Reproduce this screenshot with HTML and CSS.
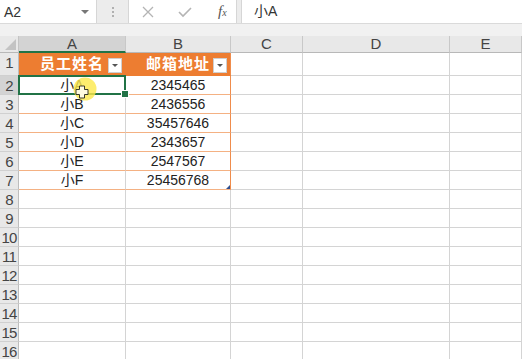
FILE: index.html
```html
<!DOCTYPE html>
<html lang="zh-CN">
<head>
    <meta charset="UTF-8">
    <title>员工表</title>
    <link rel="stylesheet" href="styles.css">
</head>
<body>
    <div class="app">
        <!-- formula bar -->
        <div class="formula-bar">
            <div class="name-box">
                <span>A2</span>
                <span class="caret"></span>
            </div>
            <div class="grip">
                <i></i><i></i><i></i>
            </div>
            <div class="fx-buttons">
                <svg class="icon" width="12" height="12" viewBox="0 0 12 12"><path d="M1 1 L11 11 M11 1 L1 11" stroke="#b4b4b4" stroke-width="1.3" fill="none"/></svg>
                <svg class="icon" width="14" height="12" viewBox="0 0 14 12"><path d="M1 6 L5 10 L13 2" stroke="#b4b4b4" stroke-width="1.6" fill="none"/></svg>
                <span class="fx">f<sub>x</sub></span>
            </div>
            <div class="formula-input">小A</div>
        </div>

        <div class="gap"></div>

        <!-- sheet -->
        <div class="sheet">
            <div class="corner"></div>
            <div class="col-head selected">A</div>
            <div class="col-head">B</div>
            <div class="col-head">C</div>
            <div class="col-head">D</div>
            <div class="col-head">E</div>

            <div class="row-head">1</div>
            <div class="cell th">员工姓名<span class="filter"></span></div>
            <div class="cell th last">邮箱地址<span class="filter"></span></div>
            <div class="cell"></div>
            <div class="cell"></div>
            <div class="cell"></div>

            <div class="row-head selected">2</div>
            <div class="cell td active">小A</div>
            <div class="cell td last">2345465</div>
            <div class="cell"></div>
            <div class="cell"></div>
            <div class="cell"></div>

            <div class="row-head">3</div>
            <div class="cell td">小B</div>
            <div class="cell td last">2436556</div>
            <div class="cell"></div>
            <div class="cell"></div>
            <div class="cell"></div>

            <div class="row-head">4</div>
            <div class="cell td">小C</div>
            <div class="cell td last">35457646</div>
            <div class="cell"></div>
            <div class="cell"></div>
            <div class="cell"></div>

            <div class="row-head">5</div>
            <div class="cell td">小D</div>
            <div class="cell td last">2343657</div>
            <div class="cell"></div>
            <div class="cell"></div>
            <div class="cell"></div>

            <div class="row-head">6</div>
            <div class="cell td">小E</div>
            <div class="cell td last">2547567</div>
            <div class="cell"></div>
            <div class="cell"></div>
            <div class="cell"></div>

            <div class="row-head">7</div>
            <div class="cell td">小F</div>
            <div class="cell td last end">25456768</div>
            <div class="cell"></div>
            <div class="cell"></div>
            <div class="cell"></div>

            <div class="row-head">8</div>
            <div class="cell"></div><div class="cell"></div><div class="cell"></div><div class="cell"></div><div class="cell"></div>
            <div class="row-head">9</div>
            <div class="cell"></div><div class="cell"></div><div class="cell"></div><div class="cell"></div><div class="cell"></div>
            <div class="row-head">10</div>
            <div class="cell"></div><div class="cell"></div><div class="cell"></div><div class="cell"></div><div class="cell"></div>
            <div class="row-head">11</div>
            <div class="cell"></div><div class="cell"></div><div class="cell"></div><div class="cell"></div><div class="cell"></div>
            <div class="row-head">12</div>
            <div class="cell"></div><div class="cell"></div><div class="cell"></div><div class="cell"></div><div class="cell"></div>
            <div class="row-head">13</div>
            <div class="cell"></div><div class="cell"></div><div class="cell"></div><div class="cell"></div><div class="cell"></div>
            <div class="row-head">14</div>
            <div class="cell"></div><div class="cell"></div><div class="cell"></div><div class="cell"></div><div class="cell"></div>
            <div class="row-head">15</div>
            <div class="cell"></div><div class="cell"></div><div class="cell"></div><div class="cell"></div><div class="cell"></div>
            <div class="row-head">16</div>
            <div class="cell"></div><div class="cell"></div><div class="cell"></div><div class="cell"></div><div class="cell"></div>
        </div>

        <!-- mouse pointer with highlight -->
        <svg class="pointer" width="28" height="30" viewBox="0 0 28 30">
            <circle cx="12" cy="12" r="11.5" fill="#fce94a" fill-opacity="0.8"/>
            <path d="M3 12.5 H6.5 V9 H11.5 V12.5 H15 V17.5 H11.5 V21 H6.5 V17.5 H3 Z" fill="#fffbe0" stroke="#3a3a2a" stroke-width="1"/>
        </svg>
    </div>
</body>
</html>
```

FILE: styles.css
```css
* {
    margin: 0;
    padding: 0;
    box-sizing: border-box;
}

body {
    background: #f1f1f1;
    font-family: 'Liberation Sans', 'Noto Sans CJK SC', sans-serif;
    color: #222;
    overflow: hidden;
}

.app {
    position: relative;
    width: 522px;
    height: 359px;
}

/* formula bar */
.formula-bar {
    display: flex;
    height: 24px;
    border-bottom: 1px solid #dadada;
    background: #ececec;
}

.name-box {
    width: 97px;
    height: 23px;
    background: #fff;
    border-right: 1px solid #d6d6d6;
    display: flex;
    align-items: center;
    justify-content: space-between;
    padding: 0 7px 0 4px;
    font-size: 14px;
    color: #333;
}

.caret {
    width: 0;
    height: 0;
    border-left: 4px solid transparent;
    border-right: 4px solid transparent;
    border-top: 4px solid #777;
}

.grip {
    width: 31px;
    display: flex;
    flex-direction: column;
    align-items: center;
    justify-content: center;
    gap: 2px;
}

.grip i {
    width: 2px;
    height: 2px;
    background: #b0b0b0;
}

.fx-buttons {
    width: 109px;
    height: 23px;
    background: #fff;
    border-left: 1px solid #d6d6d6;
    border-right: 1px solid #d6d6d6;
    display: flex;
    align-items: center;
    padding-left: 13px;
    gap: 24px;
}

.fx {
    font-family: 'Liberation Serif', serif;
    font-style: italic;
    font-size: 15px;
    color: #555;
    margin-left: 2px;
}

.fx sub {
    font-size: 10px;
    vertical-align: 0;
}

.formula-input {
    flex: 1;
    height: 23px;
    margin-left: 4px;
    background: #fff;
    border-left: 1px solid #d6d6d6;
    padding-left: 12px;
    font-size: 14px;
    line-height: 22px;
    color: #333;
}

.gap {
    height: 12px;
}

/* sheet grid */
.sheet {
    display: grid;
    grid-template-columns: 19px 107px 105px 72px 147px 72px;
    grid-template-rows: 17px 23px repeat(15, 19px);
    background: #fff;
}

.corner {
    position: relative;
    background: #e8e8e8;
    border-right: 1px solid #c4c4c4;
    border-bottom: 1px solid #b8b8b8;
}

.corner::after {
    content: '';
    position: absolute;
    right: 2px;
    bottom: 2px;
    width: 0;
    height: 0;
    border-left: 11px solid transparent;
    border-bottom: 11px solid #c3c3c3;
}

.col-head {
    background: #e8e8e8;
    border-right: 1px solid #c8c8c8;
    border-bottom: 1px solid #b8b8b8;
    text-align: center;
    font-size: 15px;
    line-height: 16px;
    color: #444;
}

.col-head.selected {
    background: #d3d3d3;
    border-bottom: 2px solid #217346;
    line-height: 15px;
}

.row-head {
    background: #e8e8e8;
    border-right: 1px solid #bdbdbd;
    border-bottom: 1px solid #d0d0d0;
    text-align: center;
    font-size: 15px;
    line-height: 19px;
    color: #444;
    letter-spacing: -0.8px;
}

.row-head.selected {
    background: #d3d3d3;
}

.cell {
    position: relative;
    border-right: 1px solid #d4d4d4;
    border-bottom: 1px solid #d4d4d4;
    text-align: center;
    font-size: 14px;
    line-height: 18px;
}

/* table block */
.cell.th {
    background: #ed7d31;
    color: #fff;
    font-weight: bold;
    font-size: 15px;
    line-height: 22px;
    letter-spacing: 1px;
    border-bottom: 1px solid #ed7d31;
    border-right-color: #ed7d31;
}

.cell.td {
    border-bottom: 1px solid #f4b183;
}

.cell.last {
    border-right: 1px solid #ef8c4c;
}

.cell.end::after {
    content: '';
    position: absolute;
    right: 0;
    bottom: 0;
    width: 0;
    height: 0;
    border-left: 4px solid transparent;
    border-bottom: 4px solid #2f4f8f;
}

.filter {
    position: absolute;
    right: 3px;
    top: 5px;
    width: 14px;
    height: 15px;
    background: #fff;
    border: 1px solid #cfcfcf;
}

.filter::after {
    content: '';
    position: absolute;
    left: 3px;
    top: 5px;
    border-left: 3px solid transparent;
    border-right: 3px solid transparent;
    border-top: 3px solid #555;
}

.cell.active::after {
    content: '';
    position: absolute;
    left: -1px;
    top: -1px;
    right: -1px;
    bottom: -1px;
    border: 2px solid #217346;
}

.cell.active::before {
    content: '';
    position: absolute;
    right: -4px;
    bottom: -4px;
    width: 6px;
    height: 6px;
    background: #217346;
    border: 1px solid #fff;
    z-index: 1;
}

.pointer {
    position: absolute;
    left: 73px;
    top: 77px;
}
```
